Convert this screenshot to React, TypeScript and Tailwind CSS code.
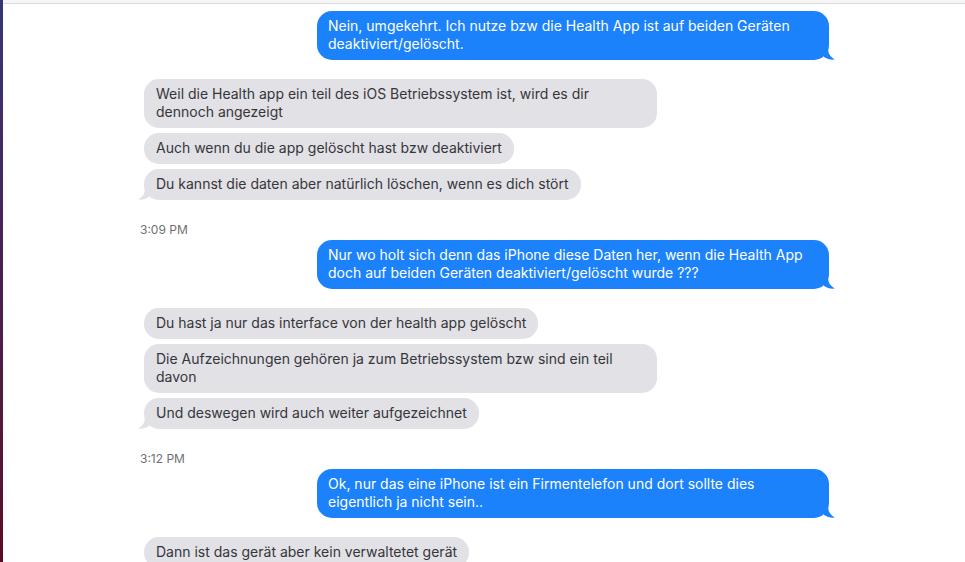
import React from "react";

type Msg =
  | { kind: "in" | "out"; text: string; tail?: boolean }
  | { kind: "time"; text: string };

const messages: Msg[] = [
  { kind: "out", text: "Nein, umgekehrt. Ich nutze bzw die Health App ist auf beiden Geräten deaktiviert/gelöscht.", tail: true },
  { kind: "in", text: "Weil die Health app ein teil des iOS Betriebssystem ist, wird es dir dennoch angezeigt" },
  { kind: "in", text: "Auch wenn du die app gelöscht hast bzw deaktiviert" },
  { kind: "in", text: "Du kannst die daten aber natürlich löschen, wenn es dich stört", tail: true },
  { kind: "time", text: "3:09 PM" },
  { kind: "out", text: "Nur wo holt sich denn das iPhone diese Daten her, wenn die Health App doch auf beiden Geräten deaktiviert/gelöscht wurde ???", tail: true },
  { kind: "in", text: "Du hast ja nur das interface von der health app gelöscht" },
  { kind: "in", text: "Die Aufzeichnungen gehören ja zum Betriebssystem bzw sind ein teil davon" },
  { kind: "in", text: "Und deswegen wird auch weiter aufgezeichnet", tail: true },
  { kind: "time", text: "3:12 PM" },
  { kind: "out", text: "Ok, nur das eine iPhone ist ein Firmentelefon und dort sollte dies eigentlich ja nicht sein..", tail: true },
  { kind: "in", text: "Dann ist das gerät aber kein verwaltetet gerät" },
];

const OutTail = () => (
  <svg className="absolute -right-[6px] bottom-0" width="12" height="12" viewBox="0 0 12 12">
    <path d="M0 0 L5 0 C5 5 7 9 12 11.5 C8 12 4 11 1 9 Z" fill="#1b82fb" />
  </svg>
);

const InTail = () => (
  <svg className="absolute -left-[6px] bottom-0" width="12" height="12" viewBox="0 0 12 12">
    <path d="M12 0 L7 0 C7 5 5 9 0 11.5 C4 12 8 11 11 9 Z" fill="#e1e1e6" />
  </svg>
);

function Bubble({ msg, prev }: { msg: Msg; prev?: Msg }) {
  if (msg.kind === "time") {
    return (
      <div className="-ml-[4px] mt-[23px] mb-[3px] text-[12px] leading-[14px] text-[#707070]">
        {msg.text}
      </div>
    );
  }
  const switched = prev && prev.kind !== "time" && prev.kind !== msg.kind;
  const mt = !prev ? "" : switched ? "mt-[19px]" : prev.kind === "time" ? "" : "mt-[5px]";
  if (msg.kind === "out") {
    return (
      <div className={`flex justify-end ${mt}`}>
        <div className="relative max-w-[512px] rounded-[15px] bg-[#1b82fb] px-[11px] pt-[6px] pb-[7px] text-[14px] leading-[18px] text-white">
          {msg.text}
          {msg.tail && <OutTail />}
        </div>
      </div>
    );
  }
  return (
    <div className={`flex justify-start ${mt}`}>
      <div className="relative max-w-[513px] rounded-[15px] bg-[#e1e1e6] px-[12px] pt-[6px] pb-[7px] text-[14px] leading-[18px] text-[#36363a]">
        {msg.text}
        {msg.tail && <InTail />}
      </div>
    </div>
  );
}

export default function App() {
  return (
    <div
      className="flex h-[562px] w-[965px] overflow-hidden bg-white"
      style={{ fontFamily: "Inter, 'Noto Sans', sans-serif" }}
    >
      <div className="w-[3px] shrink-0 bg-gradient-to-b from-[#35357a] via-[#4a1f50] to-[#5c0a26]" />
      <div className="flex min-w-0 flex-1 flex-col">
        <div className="h-[4px] shrink-0 border-b border-[#dcdcdc] bg-[#f6f6f6]" />
        <div className="flex flex-col pl-[141px] pr-[136px] pt-[7px]">
          {messages.map((m, i) => (
            <Bubble key={i} msg={m} prev={messages[i - 1]} />
          ))}
        </div>
      </div>
    </div>
  );
}
